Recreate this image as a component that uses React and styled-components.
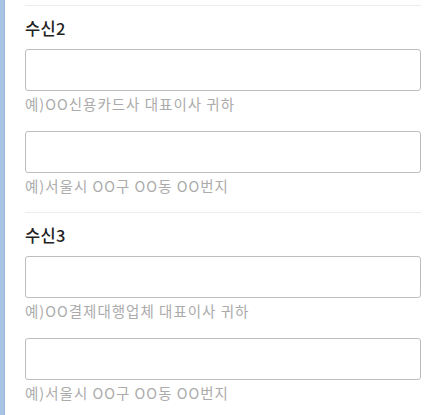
import React from 'react';
import styled, {createGlobalStyle} from 'styled-components';

const GlobalStyle = createGlobalStyle`
  html, body {
    margin: 0;
    padding: 0;
    background: #fff;
    font-family: "Noto Sans CJK KR", "Noto Sans", sans-serif;
  }
`;

const sections = [
  {
    title: '수신2',
    fields: ['예)OO신용카드사 대표이사 귀하', '예)서울시 OO구 OO동 OO번지'],
  },
  {
    title: '수신3',
    fields: ['예)OO결제대행업체 대표이사 귀하', '예)서울시 OO구 OO동 OO번지'],
  },
];

const App = () => {
  return (
    <Page>
      <GlobalStyle />
      <SideBar />
      <Content>
        {sections.map((s) => (
          <Section key={s.title}>
            <Title>{s.title}</Title>
            {s.fields.map((hint, i) => (
              <Field key={i} first={i === 0}>
                <Input type="text" />
                <Hint>{hint}</Hint>
              </Field>
            ))}
          </Section>
        ))}
      </Content>
    </Page>
  );
};

export default App;

const Page = styled.div`
  display: flex;
  width: 435px;
  height: 415px;
  overflow: hidden;
  background: #fff;
`;

const SideBar = styled.div`
  width: 4px;
  flex-shrink: 0;
  background: #a9c5e6;
  border-right: 1px solid #9ab9dd;
`;

const Content = styled.div`
  flex: 1;
  padding: 5px 14px 0 20px;
`;

const Section = styled.div`
  border-top: 1px solid #ececec;
  padding: 10px 0 16px;
`;

const Title = styled.div`
  font-size: 16.5px;
  line-height: 24px;
  font-weight: 500;
  letter-spacing: 0.3px;
  color: #222;
  margin-bottom: 9px;
`;

const Field = styled.div`
  display: flex;
  flex-direction: column;
  margin-top: ${props => props.first ? '0' : '17px'};
`;

const Input = styled.input`
  box-sizing: border-box;
  width: 100%;
  height: 42px;
  margin: 0;
  border: 1px solid #bdbdbd;
  border-radius: 3px;
  background: #fff;
  outline: none;
`;

const Hint = styled.div`
  margin-top: 3px;
  font-size: 14.5px;
  line-height: 20px;
  letter-spacing: 1px;
  color: #ababab;
`;
